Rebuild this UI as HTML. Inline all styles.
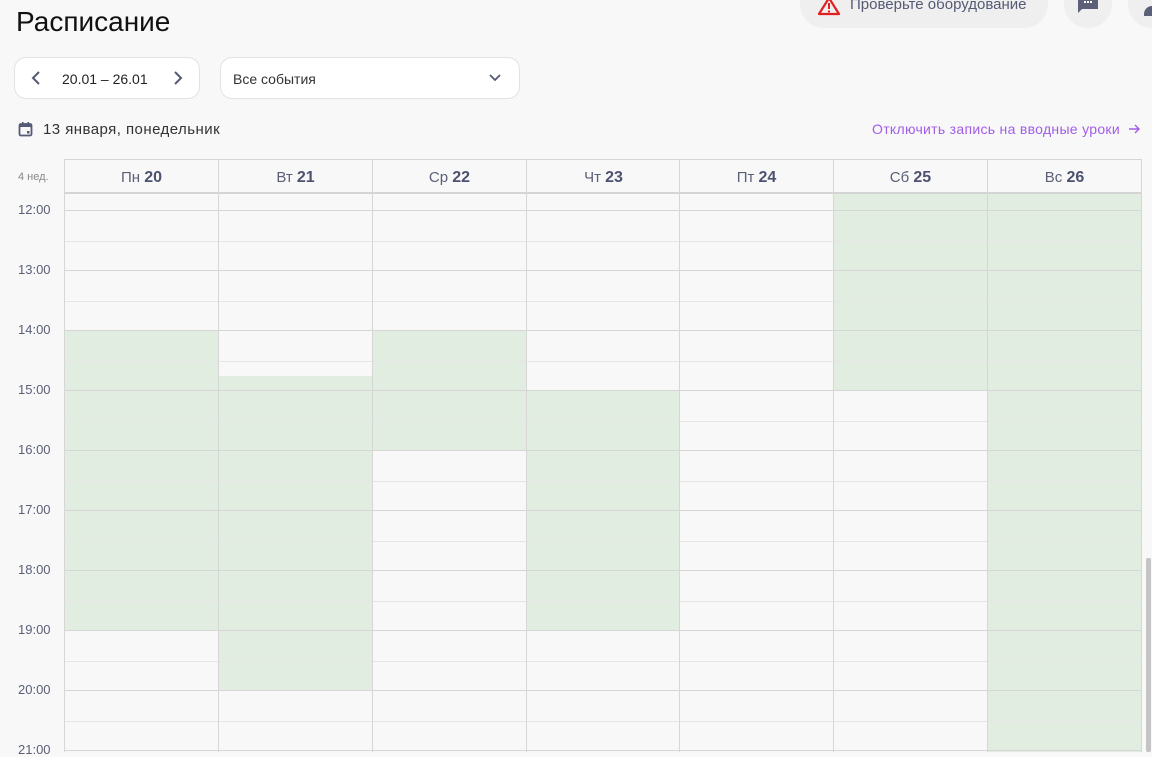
<!DOCTYPE html>
<html><head><meta charset="utf-8"><style>
*{box-sizing:border-box;margin:0;padding:0}
body{width:1152px;height:752px;overflow:hidden;background:#f8f8f8;font-family:"Liberation Sans","DejaVu Sans",sans-serif;position:relative;color:#1a1a1a}
.a{position:absolute}
.h{position:absolute;left:64px;width:1078px;height:1px;background:#d6d6d6}
.hh{position:absolute;left:64px;width:1078px;height:1px;background:#e6e6e6}
.v{position:absolute;top:159px;width:1px;height:593px;background:#d6d6d6}
.g{position:absolute;background:#e0ede0;width:153px}
.t{position:absolute;left:18px;font-size:13px;color:#5b6078;width:44px}
.d{position:absolute;top:169px;width:153px;text-align:center;font-size:15px;color:#5b6078}
.d b{font-weight:bold;color:#4c5170;font-size:16px}
</style></head><body>
<div class="a" style="left:16px;top:6px;font-size:28px;color:#111">Расписание</div>

<div class="a" style="left:800px;top:-20px;width:248px;height:48px;border-radius:24px;background:#efefef"></div>
<svg class="a" style="left:817px;top:-4px" width="24" height="20" viewBox="0 0 24 20"><path d="M12 2 L22 18 L2 18 Z" fill="none" stroke="#e02020" stroke-width="2.2" stroke-linejoin="round"/><rect x="11" y="7" width="2" height="6" fill="#e02020"/><rect x="11" y="14.5" width="2" height="2" fill="#e02020"/></svg>
<div class="a" style="left:850px;top:-4px;font-size:15px;color:#555a75">Проверьте оборудование</div>
<div class="a" style="left:1064px;top:-20px;width:48px;height:48px;border-radius:24px;background:#efefef"></div>
<svg class="a" style="left:1077px;top:-2px" width="22" height="17" viewBox="0 0 22 17"><path d="M1 0 H21 V11 H5 L1 15 Z" fill="#5b6078"/><rect x="7" y="3" width="2" height="2" fill="#fff"/><rect x="10" y="3" width="2" height="2" fill="#fff"/><rect x="13" y="3" width="2" height="2" fill="#fff"/></svg>
<div class="a" style="left:1128px;top:-20px;width:48px;height:48px;border-radius:24px;background:#efefef"></div>
<div class="a" style="left:1144px;top:6px;width:16px;height:10px;border-radius:8px 8px 0 0;background:#5b6078"></div>

<div class="a" style="left:14px;top:57px;width:186px;height:42px;border:1px solid #e2e2e2;border-radius:12px;background:#fff"></div>
<svg class="a" style="left:30px;top:70px" width="12" height="16" viewBox="0 0 12 16"><path d="M9 2 L3 8 L9 14" fill="none" stroke="#555a75" stroke-width="2"/></svg>
<div class="a" style="left:62px;top:71px;font-size:14px;color:#222">20.01 – 26.01</div>
<svg class="a" style="left:172px;top:70px" width="12" height="16" viewBox="0 0 12 16"><path d="M3 2 L9 8 L3 14" fill="none" stroke="#555a75" stroke-width="2"/></svg>
<div class="a" style="left:220px;top:57px;width:300px;height:42px;border:1px solid #e2e2e2;border-radius:12px;background:#fff"></div>
<div class="a" style="left:233px;top:71px;font-size:14px;color:#333">Все события</div>
<svg class="a" style="left:488px;top:73px" width="14" height="10" viewBox="0 0 14 10"><path d="M2 2 L7 7 L12 2" fill="none" stroke="#555a75" stroke-width="1.8"/></svg>

<svg class="a" style="left:18px;top:121px" width="15" height="16" viewBox="0 0 15 16"><rect x="1.5" y="3" width="12" height="11.5" rx="1.5" fill="none" stroke="#555a75" stroke-width="1.8"/><rect x="1.5" y="3" width="12" height="3" fill="#555a75"/><rect x="4" y="1" width="1.6" height="3" fill="#555a75"/><rect x="9.5" y="1" width="1.6" height="3" fill="#555a75"/><rect x="9" y="10" width="2.5" height="2.5" fill="#555a75"/></svg>
<div class="a" style="left:43px;top:121px;font-size:15px;color:#333;letter-spacing:0.45px">13 января, понедельник</div>
<div class="a" style="left:872px;top:121px;font-size:14px;color:#a25ce8;letter-spacing:0.3px">Отключить запись на вводные уроки</div>
<svg class="a" style="left:1128px;top:123px" width="13" height="12" viewBox="0 0 13 12"><path d="M1 6 H11 M7 2 L11 6 L7 10" fill="none" stroke="#a25ce8" stroke-width="1.4"/></svg>

<div class="a" style="left:18px;top:171px;font-size:11px;color:#888">4 нед.</div>

<div class="g" style="left:65px;top:330px;height:300px"></div>
<div class="g" style="left:219px;top:376px;height:314px"></div>
<div class="g" style="left:373px;top:330px;height:120px"></div>
<div class="g" style="left:527px;top:390px;height:240px"></div>
<div class="g" style="left:834px;top:194px;height:196px"></div>
<div class="g" style="left:988px;top:194px;height:558px"></div>

<div class="h" style="top:159px"></div>
<div class="h" style="top:192px;height:2px;background:#d4d4d4"></div>
<div class="h" style="top:210px"></div><div class="hh" style="top:241px"></div>
<div class="h" style="top:270px"></div><div class="hh" style="top:301px"></div>
<div class="h" style="top:330px"></div><div class="hh" style="top:361px"></div>
<div class="h" style="top:390px"></div><div class="hh" style="top:421px"></div>
<div class="h" style="top:450px"></div><div class="hh" style="top:481px"></div>
<div class="h" style="top:510px"></div><div class="hh" style="top:541px"></div>
<div class="h" style="top:570px"></div><div class="hh" style="top:601px"></div>
<div class="h" style="top:630px"></div><div class="hh" style="top:661px"></div>
<div class="h" style="top:690px"></div><div class="hh" style="top:721px"></div>
<div class="h" style="top:750px"></div>
<div class="v" style="left:64px"></div><div class="v" style="left:218px"></div><div class="v" style="left:372px"></div><div class="v" style="left:526px"></div><div class="v" style="left:679px"></div><div class="v" style="left:833px"></div><div class="v" style="left:987px"></div><div class="v" style="left:1141px"></div>

<div class="d" style="left:65px">Пн <b>20</b></div>
<div class="d" style="left:219px">Вт <b>21</b></div>
<div class="d" style="left:373px">Ср <b>22</b></div>
<div class="d" style="left:527px">Чт <b>23</b></div>
<div class="d" style="left:680px">Пт <b>24</b></div>
<div class="d" style="left:834px">Сб <b>25</b></div>
<div class="d" style="left:988px">Вс <b>26</b></div>

<div class="t" style="top:202px">12:00</div>
<div class="t" style="top:262px">13:00</div>
<div class="t" style="top:322px">14:00</div>
<div class="t" style="top:382px">15:00</div>
<div class="t" style="top:442px">16:00</div>
<div class="t" style="top:502px">17:00</div>
<div class="t" style="top:562px">18:00</div>
<div class="t" style="top:622px">19:00</div>
<div class="t" style="top:682px">20:00</div>
<div class="t" style="top:742px">21:00</div>

<div class="a" style="left:1146px;top:558px;width:5px;height:194px;background:#c4c4c4;border-radius:2px"></div>
</body></html>
